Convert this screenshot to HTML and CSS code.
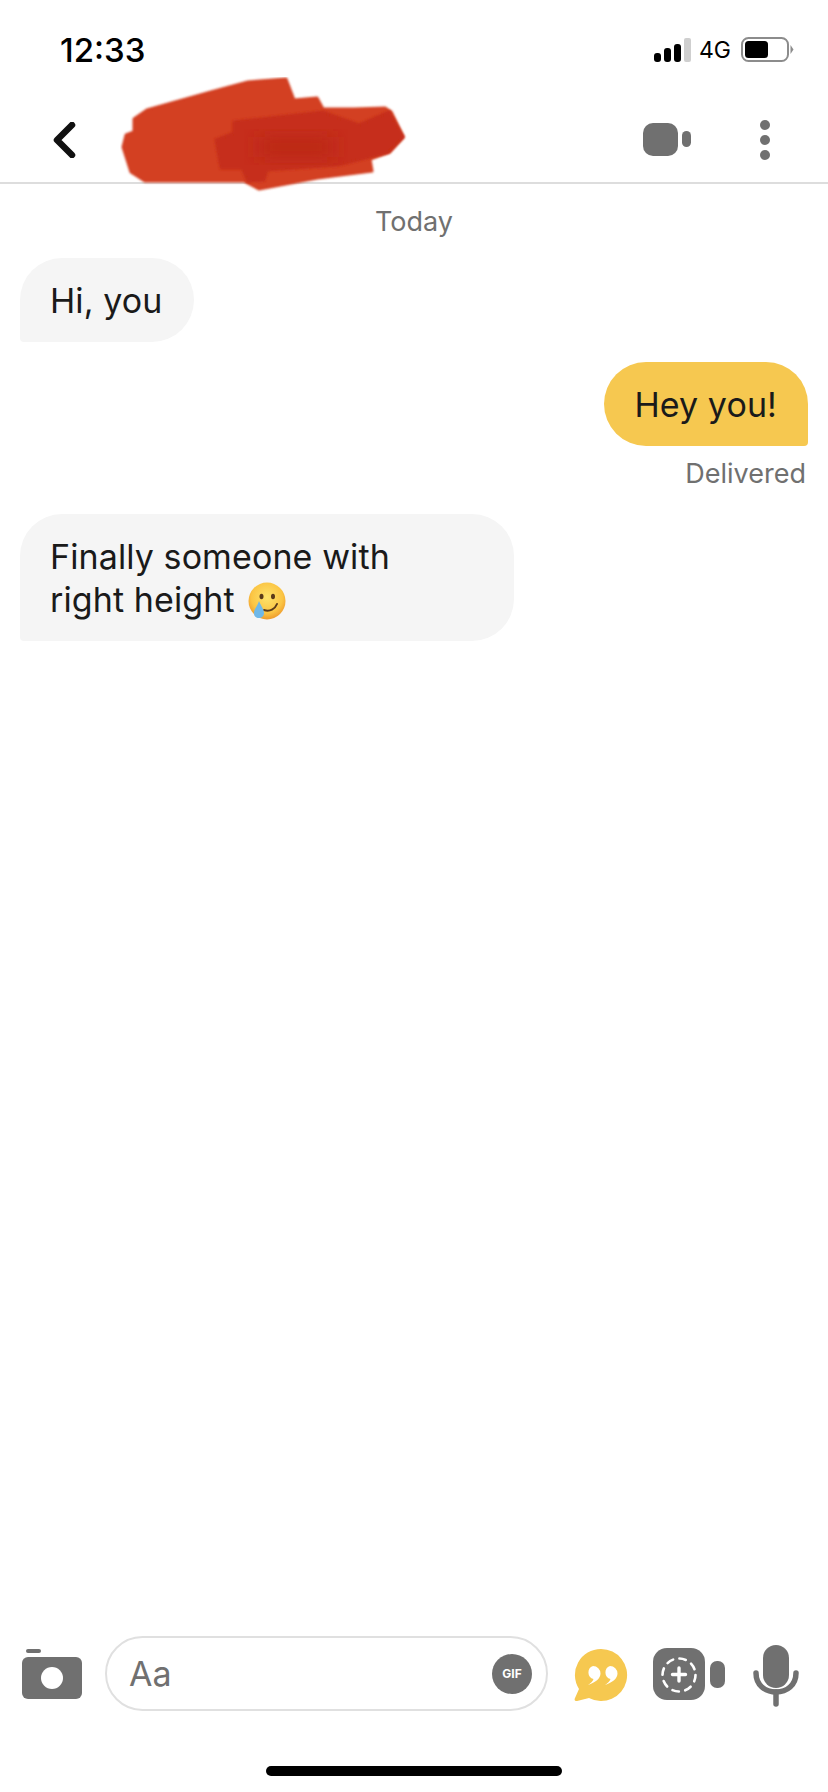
FILE: index.html
```html
<!DOCTYPE html>
<html lang="en">
<head>
  <meta charset="UTF-8">
  <meta name="viewport" content="width=device-width, initial-scale=1.0">
  <title>Chat</title>
  <link rel="stylesheet" href="styles.css">
</head>
<body>
  <div class="status-bar">
    <div class="clock">12:33</div>
    <div class="status-icons">
      <svg class="signal" width="37" height="24" viewBox="0 0 37 24">
        <rect x="0" y="15" width="7" height="9" rx="3" fill="#000"/>
        <rect x="10" y="10" width="7" height="14" rx="3" fill="#000"/>
        <rect x="20" y="6" width="7" height="18" rx="3" fill="#000"/>
        <rect x="30" y="0" width="7" height="24" rx="2" fill="#cfcfcf"/>
      </svg>
      <span class="network">4G</span>
      <svg class="battery" width="53" height="25" viewBox="0 0 53 25">
        <rect x="1" y="1" width="46" height="23" rx="6.5" fill="none" stroke="#8c8c8c" stroke-width="2"/>
        <rect x="4" y="4" width="23" height="17" rx="3.5" fill="#000"/>
        <path d="M49.5 8 L52.5 12.5 L49.5 17 Z" fill="#8c8c8c"/>
      </svg>
    </div>
  </div>

  <div class="top-bar">
    <svg class="back" width="24" height="36" viewBox="0 0 24 36">
      <path d="M20 3 L5 18 L20 33" fill="none" stroke="#111" stroke-width="6.5" stroke-linecap="round" stroke-linejoin="round"/>
    </svg>
    <!-- name blacked out with red marker -->
    <svg class="scribble" width="288" height="116" viewBox="0 0 288 116">
      <defs>
        <filter id="soft" x="-5%" y="-5%" width="110%" height="110%">
          <feGaussianBlur stdDeviation="1.2"/>
        </filter>
        <filter id="softer" x="-20%" y="-40%" width="140%" height="180%">
          <feGaussianBlur stdDeviation="9"/>
        </filter>
      </defs>
      <path d="M14 42 L27 33 L91 15 L128 5 L166 2 L174 23 L197 21 L203 32 L234 32 L265 31 L271 35 L283 60 L269 75 L250 82 L252 94 L197 101 L139 112 L124 104 L25 104 L11 95 L3 70 L6 58 L14 55 Z" fill="#d33f22" stroke="#d33f22" stroke-width="3" stroke-linejoin="round" filter="url(#soft)"/>
      <path d="M114 45 L203 35 L239 48 L269 35 L283 60 L269 75 L218 88 L147 93 L144 103 L128 104 L122 91 L101 91 L96 63 L114 56 Z" fill="#c62e1a" stroke="#c62e1a" stroke-width="3" stroke-linejoin="round" filter="url(#soft)"/>
      <rect x="139" y="60" width="74" height="20" fill="#b92716" opacity="0.8" filter="url(#softer)"/>
    </svg>
    <div class="top-actions">
      <svg width="48" height="34" viewBox="0 0 48 34">
        <rect x="0" y="0" width="35" height="33" rx="10" fill="#707070"/>
        <rect x="39" y="8" width="9" height="16" rx="4.5" fill="#707070"/>
      </svg>
      <div class="dots">
        <span></span><span></span><span></span>
      </div>
    </div>
  </div>

  <div class="messages">
    <div class="day">Today</div>
    <div class="bubble them first">Hi, you</div>
    <div class="bubble me">Hey you!</div>
    <div class="delivered">Delivered</div>
    <div class="bubble them wide">Finally someone with<br>right height
      <svg class="emoji" width="38" height="38" viewBox="0 0 38 38">
        <defs>
          <radialGradient id="face" cx="50%" cy="40%" r="60%">
            <stop offset="0%" stop-color="#fde36b"/>
            <stop offset="70%" stop-color="#fbc544"/>
            <stop offset="100%" stop-color="#ee9a2c"/>
          </radialGradient>
        </defs>
        <circle cx="19" cy="19" r="18.5" fill="url(#face)"/>
        <ellipse cx="13.5" cy="14.5" rx="2" ry="2.8" fill="#5b3a1a"/>
        <ellipse cx="25" cy="14.5" rx="2" ry="2.8" fill="#5b3a1a"/>
        <path d="M16 28 C22 30 27 27 29 22" fill="none" stroke="#5b3a1a" stroke-width="2" stroke-linecap="round"/>
        <path d="M11 19 C13 24 16 27 16 31 C16 34.5 13.5 36 11 36 C8 36 6 34.5 6 31 C6 27 9.5 24 11 19 Z" fill="#6fb8e8"/>
      </svg>
    </div>
  </div>

  <div class="composer">
    <svg class="camera" width="60" height="50" viewBox="0 0 60 50">
      <rect x="4" y="0" width="15" height="4" rx="2" fill="#707070"/>
      <rect x="0" y="8" width="60" height="42" rx="6" fill="#707070"/>
      <circle cx="30" cy="29" r="11" fill="#fff"/>
    </svg>
    <div class="input">
      <span class="placeholder">Aa</span>
      <span class="gif">GIF</span>
    </div>
    <svg class="quote" width="54" height="54" viewBox="0 0 54 54">
      <path d="M27 1 A26 26 0 1 1 15 50 L3 53 C1 53 0 52 1 50 L5 41 A26 26 0 0 1 27 1 Z" fill="#f6c850"/>
      <path d="M19 18 a7.5 7.5 0 0 1 7.5 7.5 c0 5 -5 9 -12.5 11.5 c3 -2 5 -4 5.5 -6 a6.8 6.8 0 0 1 -0.5 -13 Z" fill="#fff"/>
      <path d="M36 18 a7.5 7.5 0 0 1 7.5 7.5 c0 5 -5 9 -12.5 11.5 c3 -2 5 -4 5.5 -6 a6.8 6.8 0 0 1 -0.5 -13 Z" fill="#fff"/>
    </svg>
    <svg class="story" width="72" height="52" viewBox="0 0 72 52">
      <rect x="0" y="0" width="52" height="52" rx="14" fill="#707070"/>
      <rect x="57" y="13" width="15" height="27" rx="7" fill="#707070"/>
      <circle cx="26" cy="27" r="16.5" fill="none" stroke="#fff" stroke-width="2.6" stroke-linecap="round" stroke-dasharray="6.5 6.45"/>
      <path d="M26 20 V33 M19.5 26.5 H32.5" stroke="#fff" stroke-width="3.4" stroke-linecap="round"/>
    </svg>
    <svg class="mic" width="46" height="62" viewBox="0 0 46 62">
      <rect x="10" y="0" width="26" height="43" rx="13" fill="#707070"/>
      <path d="M3 28 C3 40 12 47 23 47 C34 47 43 40 43 28" fill="none" stroke="#707070" stroke-width="5.5" stroke-linecap="round"/>
      <path d="M23 47 V59" stroke="#707070" stroke-width="5.5" stroke-linecap="round"/>
    </svg>
  </div>

  <div class="home-row">
    <div class="home-bar"></div>
  </div>
</body>
</html>
```

FILE: styles.css
```css
* {
  margin: 0;
  padding: 0;
  box-sizing: border-box;
}

body {
  display: flex;
  flex-direction: column;
  width: 828px;
  height: 1792px;
  font-family: Inter, sans-serif;
  background-color: #fff;
  color: #1a1a1a;
  overflow: hidden;
}

svg {
  display: block;
  flex-shrink: 0;
}

/* Status bar */
.status-bar {
  display: flex;
  justify-content: space-between;
  align-items: center;
  height: 77px;
  padding: 22px 34px 0 60px;
}

.clock {
  font-size: 33px;
  font-weight: 500;
  color: #000;
}

.status-icons {
  display: flex;
  align-items: center;
}

.network {
  font-size: 23px;
  color: #000;
  margin: 0 10px 0 8px;
}

/* Top bar */
.top-bar {
  position: relative;
  display: flex;
  justify-content: space-between;
  align-items: center;
  height: 107px;
  padding: 20px 58px 0 52px;
  border-bottom: 2px solid #ddd;
}

.scribble {
  position: absolute;
  left: 120px;
  top: 0;
}

.top-actions {
  display: flex;
  align-items: center;
  gap: 69px;
}

.dots {
  display: flex;
  flex-direction: column;
  gap: 5px;
}

.dots span {
  width: 10px;
  height: 10px;
  border-radius: 50%;
  background-color: #707070;
}

/* Messages */
.messages {
  flex: 1;
  display: flex;
  flex-direction: column;
  align-items: flex-start;
  padding: 0 20px;
}

.day {
  align-self: center;
  font-size: 27px;
  color: #707070;
  margin-top: 18px;
  line-height: 40px;
}

.bubble {
  font-size: 34px;
  letter-spacing: 0.1px;
  line-height: 43px;
  border-radius: 42px;
  padding: 21px 31px 20px 30px;
}

.them {
  background-color: #f5f5f5;
  border-bottom-left-radius: 4px;
}

.me {
  align-self: flex-end;
  background-color: #f6c850;
  border-bottom-right-radius: 4px;
  margin-top: 20px;
}

.first {
  margin-top: 16px;
}

.delivered {
  align-self: flex-end;
  font-size: 27px;
  line-height: 40px;
  color: #707070;
  margin-top: 8px;
  margin-right: 2px;
}

.wide {
  width: 494px;
  margin-top: 20px;
}

.emoji {
  display: inline-block;
  vertical-align: -8px;
  margin-left: 4px;
}

/* Composer */
.composer {
  display: flex;
  align-items: center;
  height: 75px;
  padding-left: 22px;
}

.input {
  display: flex;
  justify-content: space-between;
  align-items: center;
  width: 443px;
  height: 75px;
  margin-left: 23px;
  padding: 0 14px 0 22px;
  border: 2px solid #e0e0e0;
  border-radius: 38px;
}

.placeholder {
  font-size: 34px;
  color: #707070;
}

.gif {
  display: flex;
  justify-content: center;
  align-items: center;
  width: 40px;
  height: 40px;
  border-radius: 50%;
  background-color: #707070;
  color: #fff;
  font-size: 12px;
  font-weight: 700;
}

.quote {
  margin-left: 26px;
  margin-top: 3px;
}

.story {
  margin-left: 25px;
  margin-top: 1px;
}

.mic {
  margin-left: 28px;
  margin-top: 5px;
}

.home-row {
  display: flex;
  justify-content: center;
  padding: 55px 0 16px;
}

.home-bar {
  width: 296px;
  height: 10px;
  border-radius: 5px;
  background-color: #000;
}
```
